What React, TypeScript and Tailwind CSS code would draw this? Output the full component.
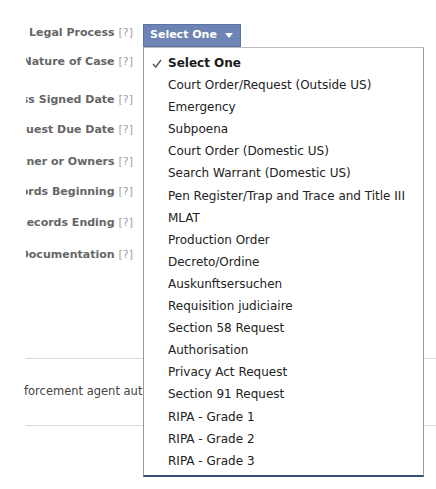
import React from "react";

const options = [
  "Select One",
  "Court Order/Request (Outside US)",
  "Emergency",
  "Subpoena",
  "Court Order (Domestic US)",
  "Search Warrant (Domestic US)",
  "Pen Register/Trap and Trace and Title III",
  "MLAT",
  "Production Order",
  "Decreto/Ordine",
  "Auskunftsersuchen",
  "Requisition judiciaire",
  "Section 58 Request",
  "Authorisation",
  "Privacy Act Request",
  "Section 91 Request",
  "RIPA - Grade 1",
  "RIPA - Grade 2",
  "RIPA - Grade 3",
];

// label text + margin above it (rows are not evenly spaced in the form)
const labels: { text: string; mt: string }[] = [
  { text: "Nature of Case", mt: "mt-[7px]" },
  { text: "Legal Process Signed Date", mt: "mt-[22px]" },
  { text: "Request Due Date", mt: "mt-[14px]" },
  { text: "Account Owner or Owners", mt: "mt-[16px]" },
  { text: "Records Beginning", mt: "mt-[14px]" },
  { text: "Records Ending", mt: "mt-[15px]" },
  { text: "Documentation", mt: "mt-[16px]" },
];

function Label({ text }: { text: string }) {
  return (
    <div className="flex h-[16px] w-[107px] shrink-0 items-center justify-end overflow-hidden whitespace-nowrap text-[11px] leading-[16px]">
      <span className="shrink-0 font-bold text-[#666666]">{text}</span>
      <span className="ml-[4px] shrink-0 text-[#a0a0a0]">[?]</span>
    </div>
  );
}

function Check() {
  return (
    <svg width="10" height="9" viewBox="0 0 10 9" className="absolute left-[8px] top-[7px]">
      <path d="M1 5 L3.8 8 L9 1" fill="none" stroke="#555" strokeWidth="1.4" />
    </svg>
  );
}

export default function App() {
  return (
    <div className="relative h-[489px] w-[436px] overflow-hidden bg-white font-['Lucida_Grande','DejaVu_Sans',sans-serif]">
      <div className="ml-[26px] flex flex-col">
        <div className="flex items-start pt-[24px]">
          <div className="mt-[1px]">
            <Label text="Legal Process" />
          </div>
          <div className="relative ml-[10px]">
            <div className="flex h-[23px] w-[98px] items-center border border-[#5b74a8] bg-[#6d84b4] pl-[6px] text-[11px] font-bold text-white">
              Select One
              <svg width="8" height="5" viewBox="0 0 8 5" className="ml-[8px]">
                <path d="M0 0 H8 L4 5 Z" fill="#fff" />
              </svg>
            </div>
            <ul className="absolute left-0 top-full z-10 w-[281px] border-x border-t border-x-[#999] border-t-[#bbb] border-b-2 border-b-[#3b4f7d] bg-white pb-[3px] pt-[4px] text-[12px] leading-[22.1px] text-[#222]">
              {options.map((o, i) => (
                <li key={o} className={`relative whitespace-nowrap pl-[24px] ${i === 0 ? "font-bold text-[#1a1a1a]" : ""}`}>
                  {i === 0 && <Check />}
                  {o}
                </li>
              ))}
            </ul>
          </div>
        </div>

        {labels.map((l) => (
          <div key={l.text} className={l.mt}>
            <Label text={l.text} />
          </div>
        ))}

        <div className="mt-[95px]">
          <div className="border-t border-[#d9d9d9]" />
          <div className="flex h-[66px] items-center">
            <p className="-ml-[2px] w-[119px] overflow-hidden whitespace-nowrap text-[11.5px] text-[#444]">
              forcement agent authorized to request this information
            </p>
          </div>
          <div className="border-t border-[#d9d9d9]" />
        </div>
      </div>
    </div>
  );
}
